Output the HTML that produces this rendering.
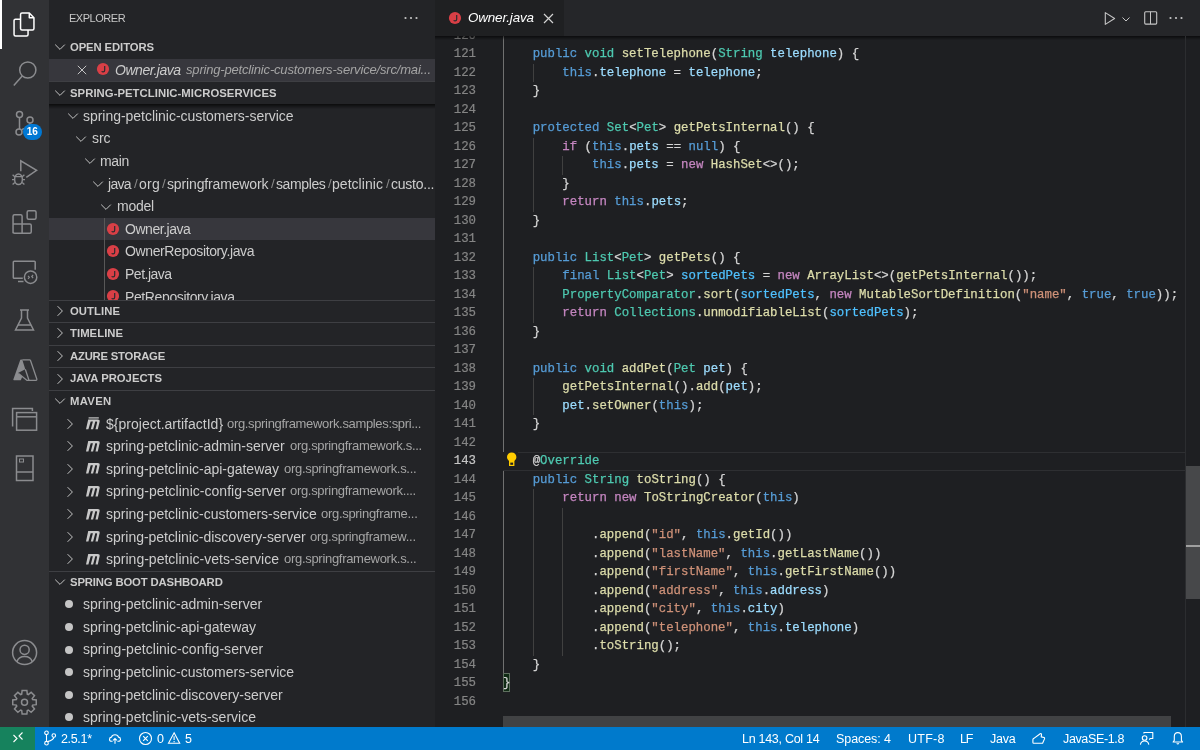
<!DOCTYPE html><html><head><meta charset="utf-8"><style>
*{box-sizing:border-box}
html,body{margin:0;padding:0;width:1200px;height:750px;overflow:hidden;background:#1e1f22}
body{position:relative;font-family:"Liberation Sans",sans-serif}
div,svg{position:absolute}
.ab{left:0;top:0;width:49px;height:727px;background:#313235}
.abact{left:0;top:0;width:2px;height:49px;background:#ffffff}
.sb{left:49px;top:0;width:386px;height:727px;background:#232427}
.ed{left:435px;top:0;width:765px;height:727px;background:#1e1f22}
.tabs{left:435px;top:0;width:765px;height:35.6px;background:#252629}
.tab{left:435px;top:0;width:128.5px;height:35.6px;background:#1f2022}
.tshadow{left:435px;top:35.6px;width:765px;height:4px;background:linear-gradient(#00000099,#00000000)}
.st{left:0;top:727px;width:1200px;height:23px;background:#007acc}
.remote{left:0;top:727px;width:35px;height:23px;background:#16825d}
.edc{left:0;top:0;width:1200px;height:727px;overflow:hidden;clip-path:inset(36px 0 0 435px)}
.ln,.cl,.t,.stt,.badge{will-change:transform}
.ln{left:440px;width:36px;height:18.5px;line-height:18.5px;text-align:right;font-family:"Liberation Mono",monospace;font-size:12.37px;color:#858585;white-space:pre;-webkit-text-stroke:0.2px currentColor}
.lna{color:#c6c6c6}
.cl{left:503px;height:18.5px;line-height:18.5px;font-family:"Liberation Mono",monospace;font-size:12.37px;color:#d4d4d4;white-space:pre;-webkit-text-stroke:0.25px currentColor}
.ig{width:1px;background:#404040}
.iga{background:#707070}
.cur{left:503px;width:682px;height:18.5px;border-bottom:1px solid #2e2f32}.curt{left:518px;width:667px;height:1px;background:#2e2f32}
.bb{left:502.6px;width:7.6px;height:18.8px;border:1px solid #5f6f5f;background:#0f2a14}
.hsb{left:503px;top:715.6px;width:667.6px;height:11.4px;background:#414244}
.ovb{left:1185px;top:36px;width:1px;height:691px;background:#2c2d30}
.vsl{left:1186px;top:466px;width:14px;height:132.5px;background:#47484a}
.ovc{left:1186px;top:545px;width:14px;height:1.6px;background:#a0a0a0}
.ic{overflow:visible}
.t{color:#cccccc;font-size:14px;white-space:nowrap}
.d{color:#a5a5a5;font-size:13px}
.sep{color:#8a8a8a;font-size:13.4px}
.sh{font-weight:bold;font-size:11.3px;color:#cccccc}
.sbd{left:49px;width:386px;height:1px;background:#3e3f43}
.sel{left:49px;width:386px;background:#37373d}
.shadow{left:49px;width:386px;height:5px;background:linear-gradient(#000000aa,#00000000)}
.clip{left:0;width:435px;overflow:hidden}
.tg{left:103.5px;width:1px;background:#585858}
.dot{width:8px;height:8px;border-radius:50%;background:#c5c5c5}
.badge{left:22.6px;top:123.6px;width:18.6px;height:16.2px;border-radius:8.1px;background:#0078d4;color:#fff;font-weight:bold;font-size:10px;line-height:16.2px;text-align:center}
.stt{top:728px;height:23px;line-height:23px;color:#ffffff;font-size:12.5px;white-space:nowrap}
</style></head><body><div class="ab"></div><div class="sb"></div><div class="ed"></div><div class="tabs"></div><div class="st"></div><div class="edc"><div class="ig iga" style="left:503.00px;top:26.50px;height:425.50px"></div><div class="ig iga" style="left:503.00px;top:470.50px;height:203.50px"></div><div class="ig" style="left:532.68px;top:63.50px;height:18.50px"></div><div class="ig" style="left:532.68px;top:137.50px;height:74.00px"></div><div class="ig" style="left:562.36px;top:156.00px;height:18.50px"></div><div class="ig" style="left:532.68px;top:267.00px;height:55.50px"></div><div class="ig" style="left:532.68px;top:378.00px;height:37.00px"></div><div class="ig" style="left:532.68px;top:489.00px;height:166.50px"></div><div class="ig" style="left:562.36px;top:507.50px;height:148.00px"></div><div class="cur" style="top:452.00px"></div><div class="curt" style="top:452.00px"></div><div class="bb" style="top:673.30px"></div><div class="ln" style="top:26.50px">120</div><div class="ln" style="top:45.00px">121</div><div class="cl" style="top:45.00px">    <span style="color:#569cd6">public</span> <span style="color:#4ec9b0">void</span> <span style="color:#dcdcaa">setTelephone</span>(<span style="color:#4ec9b0">String</span> <span style="color:#9cdcfe">telephone</span>) {</div><div class="ln" style="top:63.50px">122</div><div class="cl" style="top:63.50px">        <span style="color:#569cd6">this</span>.<span style="color:#9cdcfe">telephone</span> = <span style="color:#9cdcfe">telephone</span>;</div><div class="ln" style="top:82.00px">123</div><div class="cl" style="top:82.00px">    }</div><div class="ln" style="top:100.50px">124</div><div class="ln" style="top:119.00px">125</div><div class="cl" style="top:119.00px">    <span style="color:#569cd6">protected</span> <span style="color:#4ec9b0">Set</span>&lt;<span style="color:#4ec9b0">Pet</span>&gt; <span style="color:#dcdcaa">getPetsInternal</span>() {</div><div class="ln" style="top:137.50px">126</div><div class="cl" style="top:137.50px">        <span style="color:#c586c0">if</span> (<span style="color:#569cd6">this</span>.<span style="color:#9cdcfe">pets</span> == <span style="color:#569cd6">null</span>) {</div><div class="ln" style="top:156.00px">127</div><div class="cl" style="top:156.00px">            <span style="color:#569cd6">this</span>.<span style="color:#9cdcfe">pets</span> = <span style="color:#c586c0">new</span> <span style="color:#dcdcaa">HashSet</span>&lt;&gt;();</div><div class="ln" style="top:174.50px">128</div><div class="cl" style="top:174.50px">        }</div><div class="ln" style="top:193.00px">129</div><div class="cl" style="top:193.00px">        <span style="color:#c586c0">return</span> <span style="color:#569cd6">this</span>.<span style="color:#9cdcfe">pets</span>;</div><div class="ln" style="top:211.50px">130</div><div class="cl" style="top:211.50px">    }</div><div class="ln" style="top:230.00px">131</div><div class="ln" style="top:248.50px">132</div><div class="cl" style="top:248.50px">    <span style="color:#569cd6">public</span> <span style="color:#4ec9b0">List</span>&lt;<span style="color:#4ec9b0">Pet</span>&gt; <span style="color:#dcdcaa">getPets</span>() {</div><div class="ln" style="top:267.00px">133</div><div class="cl" style="top:267.00px">        <span style="color:#569cd6">final</span> <span style="color:#4ec9b0">List</span>&lt;<span style="color:#4ec9b0">Pet</span>&gt; <span style="color:#4fc1ff">sortedPets</span> = <span style="color:#c586c0">new</span> <span style="color:#dcdcaa">ArrayList</span>&lt;&gt;(<span style="color:#dcdcaa">getPetsInternal</span>());</div><div class="ln" style="top:285.50px">134</div><div class="cl" style="top:285.50px">        <span style="color:#4ec9b0">PropertyComparator</span>.<span style="color:#dcdcaa">sort</span>(<span style="color:#4fc1ff">sortedPets</span>, <span style="color:#c586c0">new</span> <span style="color:#dcdcaa">MutableSortDefinition</span>(<span style="color:#ce9178">&quot;name&quot;</span>, <span style="color:#569cd6">true</span>, <span style="color:#569cd6">true</span>));</div><div class="ln" style="top:304.00px">135</div><div class="cl" style="top:304.00px">        <span style="color:#c586c0">return</span> <span style="color:#4ec9b0">Collections</span>.<span style="color:#dcdcaa">unmodifiableList</span>(<span style="color:#4fc1ff">sortedPets</span>);</div><div class="ln" style="top:322.50px">136</div><div class="cl" style="top:322.50px">    }</div><div class="ln" style="top:341.00px">137</div><div class="ln" style="top:359.50px">138</div><div class="cl" style="top:359.50px">    <span style="color:#569cd6">public</span> <span style="color:#4ec9b0">void</span> <span style="color:#dcdcaa">addPet</span>(<span style="color:#4ec9b0">Pet</span> <span style="color:#9cdcfe">pet</span>) {</div><div class="ln" style="top:378.00px">139</div><div class="cl" style="top:378.00px">        <span style="color:#dcdcaa">getPetsInternal</span>().<span style="color:#dcdcaa">add</span>(<span style="color:#9cdcfe">pet</span>);</div><div class="ln" style="top:396.50px">140</div><div class="cl" style="top:396.50px">        <span style="color:#9cdcfe">pet</span>.<span style="color:#dcdcaa">setOwner</span>(<span style="color:#569cd6">this</span>);</div><div class="ln" style="top:415.00px">141</div><div class="cl" style="top:415.00px">    }</div><div class="ln" style="top:433.50px">142</div><div class="ln lna" style="top:452.00px">143</div><div class="cl" style="top:452.00px">    @<span style="color:#4ec9b0">Override</span></div><div class="ln" style="top:470.50px">144</div><div class="cl" style="top:470.50px">    <span style="color:#569cd6">public</span> <span style="color:#4ec9b0">String</span> <span style="color:#dcdcaa">toString</span>() {</div><div class="ln" style="top:489.00px">145</div><div class="cl" style="top:489.00px">        <span style="color:#c586c0">return</span> <span style="color:#c586c0">new</span> <span style="color:#dcdcaa">ToStringCreator</span>(<span style="color:#569cd6">this</span>)</div><div class="ln" style="top:507.50px">146</div><div class="ln" style="top:526.00px">147</div><div class="cl" style="top:526.00px">            .<span style="color:#dcdcaa">append</span>(<span style="color:#ce9178">&quot;id&quot;</span>, <span style="color:#569cd6">this</span>.<span style="color:#dcdcaa">getId</span>())</div><div class="ln" style="top:544.50px">148</div><div class="cl" style="top:544.50px">            .<span style="color:#dcdcaa">append</span>(<span style="color:#ce9178">&quot;lastName&quot;</span>, <span style="color:#569cd6">this</span>.<span style="color:#dcdcaa">getLastName</span>())</div><div class="ln" style="top:563.00px">149</div><div class="cl" style="top:563.00px">            .<span style="color:#dcdcaa">append</span>(<span style="color:#ce9178">&quot;firstName&quot;</span>, <span style="color:#569cd6">this</span>.<span style="color:#dcdcaa">getFirstName</span>())</div><div class="ln" style="top:581.50px">150</div><div class="cl" style="top:581.50px">            .<span style="color:#dcdcaa">append</span>(<span style="color:#ce9178">&quot;address&quot;</span>, <span style="color:#569cd6">this</span>.<span style="color:#9cdcfe">address</span>)</div><div class="ln" style="top:600.00px">151</div><div class="cl" style="top:600.00px">            .<span style="color:#dcdcaa">append</span>(<span style="color:#ce9178">&quot;city&quot;</span>, <span style="color:#569cd6">this</span>.<span style="color:#9cdcfe">city</span>)</div><div class="ln" style="top:618.50px">152</div><div class="cl" style="top:618.50px">            .<span style="color:#dcdcaa">append</span>(<span style="color:#ce9178">&quot;telephone&quot;</span>, <span style="color:#569cd6">this</span>.<span style="color:#9cdcfe">telephone</span>)</div><div class="ln" style="top:637.00px">153</div><div class="cl" style="top:637.00px">            .<span style="color:#dcdcaa">toString</span>();</div><div class="ln" style="top:655.50px">154</div><div class="cl" style="top:655.50px">    }</div><div class="ln" style="top:674.00px">155</div><div class="cl" style="top:674.00px">}</div><div class="ln" style="top:692.50px">156</div><svg class="ic" style="left:506px;top:452.0px" width="12" height="15" viewBox="0 0 12 15"><path d="M5.7 0.6 C3 0.6 1 2.6 1 5.1 C1 6.8 1.9 7.9 3 8.9 V13.9 H8.4 V8.9 C9.5 7.9 10.4 6.8 10.4 5.1 C10.4 2.6 8.4 0.6 5.7 0.6Z" fill="#ffcc00"/><rect x="4.3" y="10.6" width="2.8" height="2.2" fill="#1f2022"/></svg></div><div class="tshadow"></div><div class="hsb"></div><div class="ovb"></div><div class="vsl"></div><div class="ovc"></div><div class="tab"></div><svg class="ic" style="left:448.00px;top:11.20px" width="14" height="14" viewBox="0 0 14 14"><circle cx="7" cy="7" r="6.1" fill="#d93f46"/><path d="M8.7 3.9 V8.3 Q8.7 9.9 7.1 9.9 Q6.1 9.9 5.7 9.2" fill="none" stroke="#2a2b2f" stroke-width="1.2"/></svg><div class="t" id="f0" style="left:468px;top:0;height:36px;line-height:36px;font-style:italic;color:#ffffff;font-size:13.4px;letter-spacing:-0.137px;">Owner.java</div><svg class="ic" style="left:543px;top:13px" width="11" height="11" viewBox="0 0 11 11"><path d="M1 1 L10 10 M10 1 L1 10" stroke="#d4d4d4" stroke-width="1.2"/></svg><svg class="ic" style="left:1102px;top:10px" width="16" height="16" viewBox="0 0 16 16"><path d="M3.3 2.6 L12.6 8.5 L3.3 14.4 Z" fill="none" stroke="#c5c5c5" stroke-width="1.1" stroke-linejoin="round"/></svg><svg class="ic" style="left:1121.2px;top:13.6px" width="10" height="10" viewBox="0 0 10 10"><path d="M1.5 3.5 L5 7 L8.5 3.5" fill="none" stroke="#c5c5c5" stroke-width="1"/></svg><svg class="ic" style="left:1142px;top:10px" width="16" height="16" viewBox="0 0 16 16"><rect x="2.7" y="1.8" width="12" height="12.3" rx="1" fill="none" stroke="#c5c5c5" stroke-width="1.1"/><path d="M8.5 1.8 V14.1" stroke="#c5c5c5" stroke-width="1"/></svg><svg class="ic" style="left:1168.4px;top:12px" width="16" height="12" viewBox="0 0 16 12"><circle cx="2.5" cy="6" r="1.1" fill="#c5c5c5"/><circle cx="8" cy="6" r="1.1" fill="#c5c5c5"/><circle cx="13.5" cy="6" r="1.1" fill="#c5c5c5"/></svg><div class="t" id="f1" style="left:69.2px;top:0.00px;height:36px;line-height:36px;font-size:11px;color:#c8c8c8;letter-spacing:-0.473px;">EXPLORER</div><svg class="ic" style="left:403px;top:12px" width="16" height="12" viewBox="0 0 16 12"><circle cx="2.5" cy="6" r="1.1" fill="#c5c5c5"/><circle cx="8" cy="6" r="1.1" fill="#c5c5c5"/><circle cx="13.5" cy="6" r="1.1" fill="#c5c5c5"/></svg><svg class="ic" style="left:54.0px;top:41.3px" width="12" height="12" viewBox="0 0 12 12"><path d="M1.2 3.6 L6 8.4 L10.8 3.6" fill="none" stroke="#c5c5c5" stroke-width="1"/></svg><div class="t sh" id="f2" style="left:69.8px;top:36.00px;height:22.6px;line-height:22.6px;letter-spacing:-0.107px;">OPEN EDITORS</div><div class="sel" style="top:58.6px;height:22.4px"></div><svg class="ic" style="left:77.2px;top:64.5px" width="10" height="10" viewBox="0 0 10 10"><path d="M0.8 0.8 L9.2 9.2 M9.2 0.8 L0.8 9.2" stroke="#c5c5c5" stroke-width="1"/></svg><svg class="ic" style="left:95.60px;top:62.00px" width="14" height="14" viewBox="0 0 14 14"><circle cx="7" cy="7" r="6.1" fill="#d93f46"/><path d="M8.7 3.9 V8.3 Q8.7 9.9 7.1 9.9 Q6.1 9.9 5.7 9.2" fill="none" stroke="#2a2b2f" stroke-width="1.2"/></svg><div class="t" id="f3" style="left:114.6px;top:58.60px;height:22.6px;line-height:22.6px;font-style:italic;letter-spacing:-0.467px;">Owner.java</div><div class="t d" id="f4" style="left:186.3px;top:58.60px;height:22.6px;line-height:22.6px;font-style:italic;letter-spacing:-0.176px;">spring-petclinic-customers-service/src/mai...</div><div class="sbd" style="top:81.0px"></div><svg class="ic" style="left:54.0px;top:86.8px" width="12" height="12" viewBox="0 0 12 12"><path d="M1.2 3.6 L6 8.4 L10.8 3.6" fill="none" stroke="#c5c5c5" stroke-width="1"/></svg><div class="t sh" id="f5" style="left:69.8px;top:81.90px;height:22.6px;line-height:22.6px;letter-spacing:0.053px;">SPRING-PETCLINIC-MICROSERVICES</div><div class="clip" style="top:104px;height:195.5px"><svg class="ic" style="left:67.2px;top:6.1px" width="12" height="12" viewBox="0 0 12 12"><path d="M1.2 3.6 L6 8.4 L10.8 3.6" fill="none" stroke="#c5c5c5" stroke-width="1"/></svg><div class="t" id="f6" style="left:83.4px;top:0.80px;height:22.6px;line-height:22.6px;letter-spacing:-0.031px;">spring-petclinic-customers-service</div><svg class="ic" style="left:75.1px;top:28.7px" width="12" height="12" viewBox="0 0 12 12"><path d="M1.2 3.6 L6 8.4 L10.8 3.6" fill="none" stroke="#c5c5c5" stroke-width="1"/></svg><div class="t" id="f7" style="left:91.9px;top:23.40px;height:22.6px;line-height:22.6px;letter-spacing:-0.087px;">src</div><svg class="ic" style="left:83.6px;top:51.3px" width="12" height="12" viewBox="0 0 12 12"><path d="M1.2 3.6 L6 8.4 L10.8 3.6" fill="none" stroke="#c5c5c5" stroke-width="1"/></svg><div class="t" id="f8" style="left:99.8px;top:46.00px;height:22.6px;line-height:22.6px;letter-spacing:-0.352px;">main</div><svg class="ic" style="left:92.0px;top:73.9px" width="12" height="12" viewBox="0 0 12 12"><path d="M1.2 3.6 L6 8.4 L10.8 3.6" fill="none" stroke="#c5c5c5" stroke-width="1"/></svg><svg class="ic" style="left:100.1px;top:96.5px" width="12" height="12" viewBox="0 0 12 12"><path d="M1.2 3.6 L6 8.4 L10.8 3.6" fill="none" stroke="#c5c5c5" stroke-width="1"/></svg><div class="t" id="f9" style="left:116.6px;top:91.20px;height:22.6px;line-height:22.6px;letter-spacing:-0.283px;">model</div><div class="t" id="f10" style="left:108.2px;top:68.60px;height:22.6px;line-height:22.6px;letter-spacing:-0.730px;">java</div><div class="t" id="f11" style="left:139.0px;top:68.60px;height:22.6px;line-height:22.6px;letter-spacing:0.226px;">org</div><div class="t" id="f12" style="left:166.5px;top:68.60px;height:22.6px;line-height:22.6px;letter-spacing:-0.142px;">springframework</div><div class="t" id="f13" style="left:275.5px;top:68.60px;height:22.6px;line-height:22.6px;letter-spacing:-0.391px;">samples</div><div class="t" id="f14" style="left:332.3px;top:68.60px;height:22.6px;line-height:22.6px;letter-spacing:0.039px;">petclinic</div><div class="t" id="f15" style="left:390.5px;top:68.60px;height:22.6px;line-height:22.6px;letter-spacing:-0.234px;">custo...</div><div class="t sep" style="left:133.7px;top:68.60px;height:22.6px;line-height:22.6px">/</div><div class="t sep" style="left:161.5px;top:68.60px;height:22.6px;line-height:22.6px">/</div><div class="t sep" style="left:270.5px;top:68.60px;height:22.6px;line-height:22.6px">/</div><div class="t sep" style="left:328.0px;top:68.60px;height:22.6px;line-height:22.6px">/</div><div class="t sep" style="left:385.5px;top:68.60px;height:22.6px;line-height:22.6px">/</div><div class="sel" style="top:113.80px;height:22.6px"></div><svg class="ic" style="left:105.80px;top:117.50px" width="14" height="14" viewBox="0 0 14 14"><circle cx="7" cy="7" r="6.1" fill="#d93f46"/><path d="M8.7 3.9 V8.3 Q8.7 9.9 7.1 9.9 Q6.1 9.9 5.7 9.2" fill="none" stroke="#2a2b2f" stroke-width="1.2"/></svg><div class="t" id="f16" style="left:124.5px;top:113.80px;height:22.6px;line-height:22.6px;letter-spacing:-0.460px;">Owner.java</div><svg class="ic" style="left:105.80px;top:140.10px" width="14" height="14" viewBox="0 0 14 14"><circle cx="7" cy="7" r="6.1" fill="#d93f46"/><path d="M8.7 3.9 V8.3 Q8.7 9.9 7.1 9.9 Q6.1 9.9 5.7 9.2" fill="none" stroke="#2a2b2f" stroke-width="1.2"/></svg><div class="t" id="f17" style="left:124.5px;top:136.40px;height:22.6px;line-height:22.6px;letter-spacing:-0.378px;">OwnerRepository.java</div><svg class="ic" style="left:105.80px;top:162.70px" width="14" height="14" viewBox="0 0 14 14"><circle cx="7" cy="7" r="6.1" fill="#d93f46"/><path d="M8.7 3.9 V8.3 Q8.7 9.9 7.1 9.9 Q6.1 9.9 5.7 9.2" fill="none" stroke="#2a2b2f" stroke-width="1.2"/></svg><div class="t" id="f18" style="left:124.5px;top:159.00px;height:22.6px;line-height:22.6px;letter-spacing:-0.499px;">Pet.java</div><svg class="ic" style="left:105.80px;top:185.30px" width="14" height="14" viewBox="0 0 14 14"><circle cx="7" cy="7" r="6.1" fill="#d93f46"/><path d="M8.7 3.9 V8.3 Q8.7 9.9 7.1 9.9 Q6.1 9.9 5.7 9.2" fill="none" stroke="#2a2b2f" stroke-width="1.2"/></svg><div class="t" id="f19" style="left:124.5px;top:181.60px;height:22.6px;line-height:22.6px;letter-spacing:-0.380px;">PetRepository.java</div><div class="tg" style="top:113.8px;height:100px"></div><div class="shadow" style="top:0px"></div></div><div class="sbd" style="top:299.5px"></div><svg class="ic" style="left:54.0px;top:304.8px" width="12" height="12" viewBox="0 0 12 12"><path d="M3.6 1.2 L8.4 6 L3.6 10.8" fill="none" stroke="#c5c5c5" stroke-width="1"/></svg><div class="t sh" id="f20" style="left:69.8px;top:299.50px;height:22.6px;line-height:22.6px;letter-spacing:0.069px;">OUTLINE</div><div class="sbd" style="top:322.1px"></div><svg class="ic" style="left:54.0px;top:327.4px" width="12" height="12" viewBox="0 0 12 12"><path d="M3.6 1.2 L8.4 6 L3.6 10.8" fill="none" stroke="#c5c5c5" stroke-width="1"/></svg><div class="t sh" id="f21" style="left:69.8px;top:322.10px;height:22.6px;line-height:22.6px;letter-spacing:0.054px;">TIMELINE</div><div class="sbd" style="top:344.7px"></div><svg class="ic" style="left:54.0px;top:350.0px" width="12" height="12" viewBox="0 0 12 12"><path d="M3.6 1.2 L8.4 6 L3.6 10.8" fill="none" stroke="#c5c5c5" stroke-width="1"/></svg><div class="t sh" id="f22" style="left:69.8px;top:344.70px;height:22.6px;line-height:22.6px;letter-spacing:-0.210px;">AZURE STORAGE</div><div class="sbd" style="top:367.3px"></div><svg class="ic" style="left:54.0px;top:372.6px" width="12" height="12" viewBox="0 0 12 12"><path d="M3.6 1.2 L8.4 6 L3.6 10.8" fill="none" stroke="#c5c5c5" stroke-width="1"/></svg><div class="t sh" id="f23" style="left:69.8px;top:367.30px;height:22.6px;line-height:22.6px;letter-spacing:-0.006px;">JAVA PROJECTS</div><div class="sbd" style="top:389.9px"></div><svg class="ic" style="left:54.0px;top:395.2px" width="12" height="12" viewBox="0 0 12 12"><path d="M1.2 3.6 L6 8.4 L10.8 3.6" fill="none" stroke="#c5c5c5" stroke-width="1"/></svg><div class="t sh" id="f24" style="left:69.8px;top:389.90px;height:22.6px;line-height:22.6px;letter-spacing:0.307px;">MAVEN</div><svg class="ic" style="left:64.0px;top:417.8px" width="12" height="12" viewBox="0 0 12 12"><path d="M3.6 1.2 L8.4 6 L3.6 10.8" fill="none" stroke="#c5c5c5" stroke-width="1"/></svg><svg class="ic" style="left:85.60px;top:417.30px" width="15" height="13" viewBox="0 0 15 13"><g transform="translate(0 2.6) scale(1 0.92)"><path d="M0 10.4 L2.2 0 H11.6 Q14.1 0 13.6 2.3 L11.8 10.4 H9.5 L11.1 3.1 Q11.3 2.2 10.5 2.2 H9.3 L7.1 10.4 H4.8 L6.9 2.2 H4.7 L2.4 10.4 Z" fill="#c8c8c8"/></g><path d="M2.6 0.9 H12.8" stroke="#c8c8c8" stroke-width="1.2"/></svg><div class="t" id="f25" style="left:105.7px;top:412.50px;height:22.6px;line-height:22.6px;letter-spacing:0.018px;">${project.artifactId}</div><div class="t d" id="f26" style="left:227.4px;top:412.50px;height:22.6px;line-height:22.6px;letter-spacing:-0.336px;">org.springframework.samples:spri...</div><svg class="ic" style="left:64.0px;top:440.4px" width="12" height="12" viewBox="0 0 12 12"><path d="M3.6 1.2 L8.4 6 L3.6 10.8" fill="none" stroke="#c5c5c5" stroke-width="1"/></svg><svg class="ic" style="left:85.60px;top:440.80px" width="15" height="11" viewBox="0 0 15 11"><path d="M0 10.4 L2.2 0 H11.6 Q14.1 0 13.6 2.3 L11.8 10.4 H9.5 L11.1 3.1 Q11.3 2.2 10.5 2.2 H9.3 L7.1 10.4 H4.8 L6.9 2.2 H4.7 L2.4 10.4 Z" fill="#c8c8c8"/></svg><div class="t" id="f27" style="left:105.7px;top:435.10px;height:22.6px;line-height:22.6px;letter-spacing:-0.037px;">spring-petclinic-admin-server</div><div class="t d" id="f28" style="left:289.7px;top:435.10px;height:22.6px;line-height:22.6px;letter-spacing:-0.315px;">org.springframework.s...</div><svg class="ic" style="left:64.0px;top:463.0px" width="12" height="12" viewBox="0 0 12 12"><path d="M3.6 1.2 L8.4 6 L3.6 10.8" fill="none" stroke="#c5c5c5" stroke-width="1"/></svg><svg class="ic" style="left:85.60px;top:463.40px" width="15" height="11" viewBox="0 0 15 11"><path d="M0 10.4 L2.2 0 H11.6 Q14.1 0 13.6 2.3 L11.8 10.4 H9.5 L11.1 3.1 Q11.3 2.2 10.5 2.2 H9.3 L7.1 10.4 H4.8 L6.9 2.2 H4.7 L2.4 10.4 Z" fill="#c8c8c8"/></svg><div class="t" id="f29" style="left:105.7px;top:457.70px;height:22.6px;line-height:22.6px;letter-spacing:-0.020px;">spring-petclinic-api-gateway</div><div class="t d" id="f30" style="left:283.5px;top:457.70px;height:22.6px;line-height:22.6px;letter-spacing:-0.297px;">org.springframework.s...</div><svg class="ic" style="left:64.0px;top:485.6px" width="12" height="12" viewBox="0 0 12 12"><path d="M3.6 1.2 L8.4 6 L3.6 10.8" fill="none" stroke="#c5c5c5" stroke-width="1"/></svg><svg class="ic" style="left:85.60px;top:486.00px" width="15" height="11" viewBox="0 0 15 11"><path d="M0 10.4 L2.2 0 H11.6 Q14.1 0 13.6 2.3 L11.8 10.4 H9.5 L11.1 3.1 Q11.3 2.2 10.5 2.2 H9.3 L7.1 10.4 H4.8 L6.9 2.2 H4.7 L2.4 10.4 Z" fill="#c8c8c8"/></svg><div class="t" id="f31" style="left:105.7px;top:480.30px;height:22.6px;line-height:22.6px;letter-spacing:0.029px;">spring-petclinic-config-server</div><div class="t d" id="f32" style="left:290.3px;top:480.30px;height:22.6px;line-height:22.6px;letter-spacing:-0.307px;">org.springframework....</div><svg class="ic" style="left:64.0px;top:508.2px" width="12" height="12" viewBox="0 0 12 12"><path d="M3.6 1.2 L8.4 6 L3.6 10.8" fill="none" stroke="#c5c5c5" stroke-width="1"/></svg><svg class="ic" style="left:85.60px;top:508.60px" width="15" height="11" viewBox="0 0 15 11"><path d="M0 10.4 L2.2 0 H11.6 Q14.1 0 13.6 2.3 L11.8 10.4 H9.5 L11.1 3.1 Q11.3 2.2 10.5 2.2 H9.3 L7.1 10.4 H4.8 L6.9 2.2 H4.7 L2.4 10.4 Z" fill="#c8c8c8"/></svg><div class="t" id="f33" style="left:105.7px;top:502.90px;height:22.6px;line-height:22.6px;letter-spacing:-0.022px;">spring-petclinic-customers-service</div><div class="t d" id="f34" style="left:321.2px;top:502.90px;height:22.6px;line-height:22.6px;letter-spacing:-0.299px;">org.springframe...</div><svg class="ic" style="left:64.0px;top:530.8px" width="12" height="12" viewBox="0 0 12 12"><path d="M3.6 1.2 L8.4 6 L3.6 10.8" fill="none" stroke="#c5c5c5" stroke-width="1"/></svg><svg class="ic" style="left:85.60px;top:531.20px" width="15" height="11" viewBox="0 0 15 11"><path d="M0 10.4 L2.2 0 H11.6 Q14.1 0 13.6 2.3 L11.8 10.4 H9.5 L11.1 3.1 Q11.3 2.2 10.5 2.2 H9.3 L7.1 10.4 H4.8 L6.9 2.2 H4.7 L2.4 10.4 Z" fill="#c8c8c8"/></svg><div class="t" id="f35" style="left:105.7px;top:525.50px;height:22.6px;line-height:22.6px;letter-spacing:-0.035px;">spring-petclinic-discovery-server</div><div class="t d" id="f36" style="left:310.0px;top:525.50px;height:22.6px;line-height:22.6px;letter-spacing:-0.247px;">org.springframew...</div><svg class="ic" style="left:64.0px;top:553.4px" width="12" height="12" viewBox="0 0 12 12"><path d="M3.6 1.2 L8.4 6 L3.6 10.8" fill="none" stroke="#c5c5c5" stroke-width="1"/></svg><svg class="ic" style="left:85.60px;top:553.80px" width="15" height="11" viewBox="0 0 15 11"><path d="M0 10.4 L2.2 0 H11.6 Q14.1 0 13.6 2.3 L11.8 10.4 H9.5 L11.1 3.1 Q11.3 2.2 10.5 2.2 H9.3 L7.1 10.4 H4.8 L6.9 2.2 H4.7 L2.4 10.4 Z" fill="#c8c8c8"/></svg><div class="t" id="f37" style="left:105.7px;top:548.10px;height:22.6px;line-height:22.6px;letter-spacing:0.010px;">spring-petclinic-vets-service</div><div class="t d" id="f38" style="left:283.5px;top:548.10px;height:22.6px;line-height:22.6px;letter-spacing:-0.297px;">org.springframework.s...</div><div class="sbd" style="top:570.5px"></div><svg class="ic" style="left:54.0px;top:575.8px" width="12" height="12" viewBox="0 0 12 12"><path d="M1.2 3.6 L6 8.4 L10.8 3.6" fill="none" stroke="#c5c5c5" stroke-width="1"/></svg><div class="t sh" id="f39" style="left:69.8px;top:570.50px;height:22.6px;line-height:22.6px;letter-spacing:-0.143px;">SPRING BOOT DASHBOARD</div><div class="dot" style="left:65.1px;top:600.4px"></div><div class="t" id="f40" style="left:83.4px;top:593.10px;height:22.6px;line-height:22.6px;letter-spacing:-0.022px;">spring-petclinic-admin-server</div><div class="dot" style="left:65.1px;top:623.0px"></div><div class="t" id="f41" style="left:83.4px;top:615.70px;height:22.6px;line-height:22.6px;letter-spacing:-0.020px;">spring-petclinic-api-gateway</div><div class="dot" style="left:65.1px;top:645.6px"></div><div class="t" id="f42" style="left:83.4px;top:638.30px;height:22.6px;line-height:22.6px;letter-spacing:0.043px;">spring-petclinic-config-server</div><div class="dot" style="left:65.1px;top:668.2px"></div><div class="t" id="f43" style="left:83.4px;top:660.90px;height:22.6px;line-height:22.6px;letter-spacing:-0.019px;">spring-petclinic-customers-service</div><div class="dot" style="left:65.1px;top:690.8px"></div><div class="t" id="f44" style="left:83.4px;top:683.50px;height:22.6px;line-height:22.6px;letter-spacing:-0.032px;">spring-petclinic-discovery-server</div><div class="dot" style="left:65.1px;top:713.4px"></div><div class="t" id="f45" style="left:83.4px;top:706.10px;height:22.6px;line-height:22.6px;letter-spacing:0.010px;">spring-petclinic-vets-service</div><div class="abact"></div><svg class="ic" style="left:0;top:0" width="49" height="727" viewBox="0 0 49 727"><g fill="none" stroke="#ffffff" stroke-width="1.5" stroke-linejoin="round"><path d="M29.3 13.05 H22 Q20.55 13.05 20.55 14.5 V28.5 Q20.55 29.95 22 29.95 H32.5 Q33.95 29.95 33.95 28.5 V17.7 Z M29.3 13.05 V17.7 H33.95"/><path d="M20.55 19.15 H15.5 Q14.05 19.15 14.05 20.6 V34.6 Q14.05 36.05 15.5 36.05 H26.6 Q28.05 36.05 28.05 34.6 V29.95"/></g><g fill="none" stroke="#8b8c8f" stroke-width="1.5"><circle cx="27.8" cy="70" r="8.1"/><path d="M22.2 75.9 L13.8 85.4"/><circle cx="19.5" cy="114.5" r="3"/><circle cx="30" cy="120" r="3"/><circle cx="19" cy="132" r="3"/><path d="M19.5 117.5 V129 M30 123 Q30 127 22 129.5"/><path d="M20.8 171.2 V160.8 L36.6 170.4 L26.3 177.4"/><ellipse cx="18.5" cy="179.2" rx="3.9" ry="5.3"/><path d="M14.8 176.6 H22.2 M12.6 174.8 L14.8 176.8 M12 179.6 H14.6 M12.6 184.4 L14.8 182.4 M24.4 174.8 L22.2 176.8 M25 179.6 H22.4 M24.4 184.4 L22.2 182.4" stroke-width="1.3"/><rect x="27.15" y="210.65" width="8.9" height="8.6" rx="1.5"/><path d="M13.05 233.15 V216.35 Q13.05 214.85 14.55 214.85 H20.6 Q22.1 214.85 22.1 216.35 V224 H29.75 Q31.25 224 31.25 225.5 V231.65 Q31.25 233.15 29.75 233.15 H14.55 Q13.05 233.15 13.05 231.65 M13.05 224 H22.1 V233.15"/><path d="M22.8 278.3 H14.2 Q13.3 278.3 13.3 277.4 V262 Q13.3 261.2 14.2 261.2 H34.3 Q35.2 261.2 35.2 262 V269.8"/><path d="M18 281.5 H23.5"/><circle cx="30.6" cy="277.2" r="6.2"/><path d="M28 275.8 L29.4 277.3 L28 278.8 M33.1 275 L31.7 276.5 L33.1 278" stroke-width="1.1"/><path d="M20 310 H29 M21.5 310 V318 L15.5 330 H33.5 L27.5 318 V310"/><path d="M18 325 H31"/></g><g fill="#8b8c8f"><path d="M20.3 359.8 Q21.3 359.2 22.3 359.8 L25.3 369.3 L18 373 L22.4 376.5 L20.8 380.3 H14 Q13 380.3 13.4 379.3 Z"/></g><g fill="none" stroke="#8b8c8f" stroke-width="1.3" stroke-linejoin="round"><path d="M22.3 359.8 H29.5 Q30.2 359.8 30.5 360.5 L36.8 379 Q37 380.3 36 380.3 H26.8 L18.5 373.5 M25.3 369.3 L29 380.3"/></g><g fill="none" stroke="#8b8c8f" stroke-width="1.5"><path d="M12.6 426.5 V408.6 H32.4 V411"/><rect x="16.6" y="412.6" width="20" height="17.6"/><path d="M16.6 416.8 H36.6"/><rect x="16.5" y="456" width="16.5" height="24.5"/><path d="M16.5 472 H33"/><rect x="19.5" y="459" width="4" height="3" stroke-width="1"/><circle cx="24.6" cy="652.6" r="12"/><circle cx="24.6" cy="649.8" r="4.6"/><path d="M17 661.8 Q18.5 656.6 24.6 656.6 Q30.7 656.6 32.2 661.8"/></g><g transform="translate(24.5 702.3)" fill="none" stroke="#8b8c8f" stroke-width="1.5"><path d="M-2.38 -11.76 L2.38 -11.76 L2.79 -8.14 L3.78 -7.72 L6.63 -10.00 L10.00 -6.63 L7.72 -3.78 L8.14 -2.79 L11.76 -2.38 L11.76 2.38 L8.14 2.79 L7.72 3.78 L10.00 6.63 L6.63 10.00 L3.78 7.72 L2.79 8.14 L2.38 11.76 L-2.38 11.76 L-2.79 8.14 L-3.78 7.72 L-6.63 10.00 L-10.00 6.63 L-7.72 3.78 L-8.14 2.79 L-11.76 2.38 L-11.76 -2.38 L-8.14 -2.79 L-7.72 -3.78 L-10.00 -6.63 L-6.63 -10.00 L-3.78 -7.72 L-2.79 -8.14 Z"/><circle cx="0" cy="0" r="3"/></g></svg><div class="badge">16</div><div class="remote"></div><svg class="ic" style="left:12px;top:730px" width="12" height="15" viewBox="0 0 12 15"><path d="M1.5 5 L5 8.5 L1.5 12 M10.5 2.5 L7 6 L10.5 9.5" fill="none" stroke="#fff" stroke-width="1.1"/></svg><svg class="ic" style="left:43px;top:730px" width="14" height="16" viewBox="0 0 14 16"><g fill="none" stroke="#ffffff" stroke-width="1.1"><circle cx="3.5" cy="2.8" r="1.8"/><circle cx="3.5" cy="13.2" r="1.8"/><circle cx="10.8" cy="5.5" r="1.8"/><path d="M3.5 4.6 V11.4 M10.8 7.3 Q10.8 10 4.5 11.6"/></g></svg><div class="stt" id="f46" style="left:61px;letter-spacing:-0.334px;">2.5.1*</div><svg class="ic" style="left:108px;top:731px" width="15" height="14" viewBox="0 0 15 14"><g fill="none" stroke="#ffffff" stroke-width="1.1"><path d="M4.6 10.3 H3.6 Q1.5 10.3 1.5 8.2 Q1.5 6.3 3.5 6.1 Q4.1 3.8 7 3.8 Q9.9 3.8 10.5 6.1 Q12.5 6.3 12.5 8.2 Q12.5 10.3 10.4 10.3 H9.4"/><path d="M7 12.8 V7.6 M5.1 9.4 L7 7.5 L8.9 9.4"/></g></svg><svg class="ic" style="left:138px;top:731px" width="15" height="15" viewBox="0 0 15 15"><g fill="none" stroke="#ffffff" stroke-width="1.1"><circle cx="7.5" cy="7.5" r="6"/><path d="M5.2 5.2 L9.8 9.8 M9.8 5.2 L5.2 9.8"/></g></svg><div class="stt" style="left:157px">0</div><svg class="ic" style="left:167px;top:731px" width="15" height="14" viewBox="0 0 15 14"><g fill="none" stroke="#ffffff" stroke-width="1.1"><path d="M7.1 1.8 L12.7 12.3 H1.5 Z"/><path d="M7.1 5.3 V9 M7.1 10.1 V11.2"/></g></svg><div class="stt" style="left:185px">5</div><div class="stt" id="f47" style="left:742.4px;letter-spacing:-0.286px;">Ln 143, Col 14</div><div class="stt" id="f48" style="left:836.4px;letter-spacing:-0.075px;">Spaces: 4</div><div class="stt" id="f49" style="left:907.6px;letter-spacing:0.246px;">UTF-8</div><div class="stt" id="f50" style="left:960.4px;letter-spacing:-1.096px;">LF</div><div class="stt" id="f51" style="left:990px;letter-spacing:-0.271px;">Java</div><div class="stt" id="f52" style="left:1062.5px;letter-spacing:-0.359px;">JavaSE-1.8</div><svg class="ic" style="left:1020px;top:728px" width="180" height="22" viewBox="1020 728 180 22"><g fill="none" stroke="#ffffff" stroke-width="1.1" stroke-linejoin="round"><path d="M1032.9 739.6 Q1032.9 738.7 1033.9 738.4 L1040.2 733.7 Q1041.5 733.2 1041.5 734.8 L1041.2 736.9 L1044 737.5 Q1044.8 737.7 1044.6 738.6 L1042.6 743.3 H1033.7 Q1032.9 743.3 1032.9 742.4 Z"/><circle cx="1144.6" cy="738" r="2.3"/><path d="M1140.4 744.6 Q1141 741 1144.6 741 Q1148.2 741 1148.8 744.6"/><path d="M1143.9 733.6 V732.5 H1152.8 V738.5 H1150.3 L1149.2 739.6"/><path d="M1173.1 742 H1182.6 L1181.4 740.4 V736.6 Q1181.4 732.6 1177.8 732.6 Q1174.3 732.6 1174.3 736.6 V740.4 Z"/><path d="M1176.7 743.4 Q1177.8 744.6 1178.9 743.4"/></g></svg></body></html>
